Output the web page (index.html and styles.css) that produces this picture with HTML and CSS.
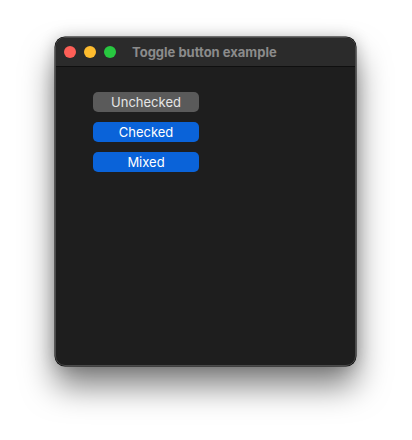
FILE: index.html
```html
<!DOCTYPE html>
<html>
<head>
<meta charset="utf-8">
<link rel="stylesheet" href="styles.css">
</head>
<body>
<div class="window">
  <div class="titlebar">
    <div class="lights">
      <span class="light red"></span>
      <span class="light yellow"></span>
      <span class="light green"></span>
    </div>
    <div class="title">Toggle button example</div>
  </div>
  <div class="content">
    <button class="btn off">Unchecked</button>
    <button class="btn on">Checked</button>
    <button class="btn on">Mixed</button>
  </div>
</div>
</body>
</html>
```
FILE: styles.css
```css
html, body {
  margin: 0;
  background: #ffffff;
}
body {
  min-height: 440px;
  box-sizing: border-box;
  padding: 37px 0 0 55px;
  font-family: "Inter", "Liberation Sans", sans-serif;
}
.window {
  width: 301px;
  height: 329px;
  box-sizing: border-box;
  background: #1e1e1e;
  border: 1px solid #4a4a4a;
  border-radius: 10px;
  overflow: hidden;
  box-shadow: 0 0 0 0.5px #000, 0 20px 32px rgba(0,0,0,0.5), 0 0 16px rgba(0,0,0,0.2);
}
.titlebar {
  height: 28px;
  background: #2b2b2b;
  border-bottom: 1px solid #0f0f0f;
  display: flex;
  align-items: center;
  padding-left: 8px;
}
.lights {
  display: flex;
  gap: 8px;
}
.light {
  width: 12px;
  height: 12px;
  border-radius: 50%;
}
.red { background: #fe5f57; }
.yellow { background: #febc2e; }
.green { background: #28c840; }
.title {
  margin-left: 16px;
  color: #8b8b8b;
  font-weight: 700;
  font-size: 13px;
}
.content {
  padding: 25px 0 0 37px;
  display: flex;
  flex-direction: column;
  gap: 10px;
}
.btn {
  width: 106px;
  height: 20px;
  border: none;
  border-radius: 5px;
  padding: 0;
  font-family: "Inter", "Liberation Sans", sans-serif;
  font-size: 13px;
  color: #e6e6e6;
}
.off { background: #5a5a5a; }
.on { background: #0a63d9; color: #ffffff; }
```
